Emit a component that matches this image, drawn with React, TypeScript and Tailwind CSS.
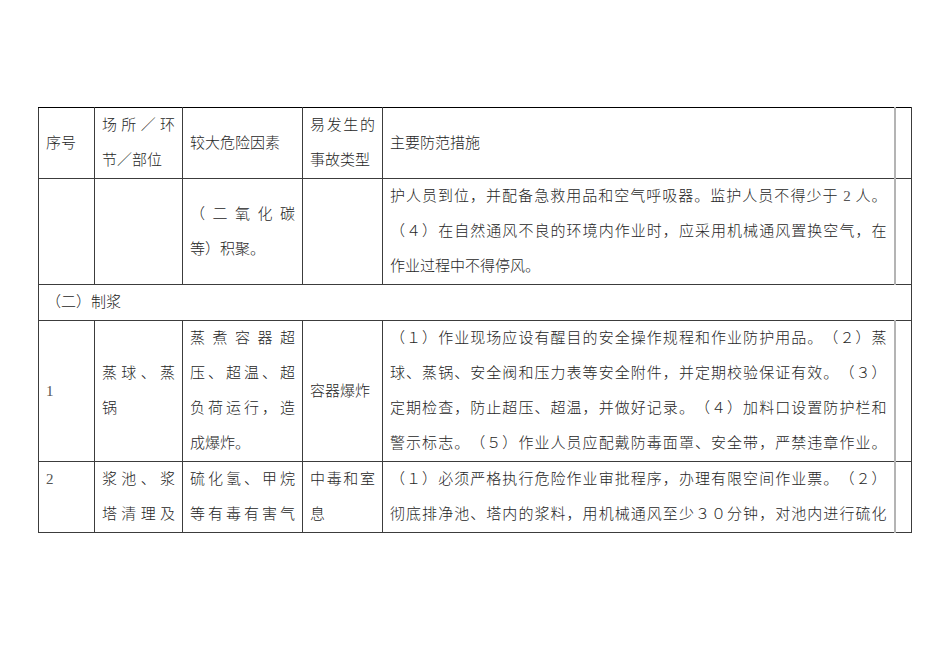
import React from "react";

type L = { t: React.ReactNode; j?: boolean };

const Cell = ({ lines, className = "" }: { lines: L[]; className?: string }) => (
  <td className={`border border-[#3c3c3c] px-[7px] py-0 ${className}`}>
    {lines.map((l, i) => (
      <div
        key={i}
        className={l.j ? "whitespace-nowrap text-justify [text-align-last:justify]" : "whitespace-nowrap"}
      >
        {l.t}
      </div>
    ))}
  </td>
);

const Narrow = () => <td className="border border-[#3c3c3c] border-l-2 border-l-[#b4b4b4] p-0"></td>;

export default function App() {
  return (
    <div className="w-[950px] h-[672px] bg-white overflow-hidden">
      <div className="pt-[107px] pl-[38px]">
        <table
          className="table-fixed border-collapse text-[15px] leading-[35px] font-light text-[#262626] border-t border-t-black [text-spacing-trim:space-all]"
          style={{ fontFamily: '"Liberation Serif", "Noto Sans CJK SC", serif' }}
        >
          <colgroup>
            <col className="w-[56px]" />
            <col className="w-[88px]" />
            <col className="w-[120px]" />
            <col className="w-[80px]" />
            <col className="w-[512px]" />
            <col className="w-[17px]" />
          </colgroup>
          <tbody>
            <tr className="align-middle h-[71px]">
              <Cell className="border-t-black" lines={[{ t: "序号" }]} />
              <Cell className="border-t-black" lines={[{ t: "场所／环", j: true }, { t: "节／部位" }]} />
              <Cell className="border-t-black" lines={[{ t: "较大危险因素" }]} />
              <Cell className="border-t-black" lines={[{ t: "易发生的", j: true }, { t: "事故类型" }]} />
              <Cell className="border-t-black" lines={[{ t: "主要防范措施" }]} />
              <td className="border border-[#3c3c3c] border-t-black border-l-2 border-l-[#b4b4b4] p-0"></td>
            </tr>
            <tr className="align-middle">
              <Cell lines={[]} />
              <Cell lines={[]} />
              <Cell lines={[{ t: "（二氧化碳", j: true }, { t: "等）积聚。" }]} />
              <Cell lines={[]} />
              <Cell
                lines={[
                  {
                    t: (
                      <>
                        护人员到位，并配备急救用品和空气呼吸器。监护人员不得少于 <span className="font-normal text-[#555]">2</span> 人。
                      </>
                    ),
                    j: true,
                  },
                  { t: "（４）在自然通风不良的环境内作业时，应采用机械通风置换空气，在", j: true },
                  { t: "作业过程中不得停风。" },
                ]}
              />
              <Narrow />
            </tr>
            <tr>
              <td colSpan={6} className="border border-[#3c3c3c] px-[7px] py-0 h-[36px]">
                （二）制浆
              </td>
            </tr>
            <tr className="align-middle">
              <Cell className="font-normal text-[#555]" lines={[{ t: "1" }]} />
              <Cell lines={[{ t: "蒸球、蒸", j: true }, { t: "锅" }]} />
              <Cell
                lines={[
                  { t: "蒸煮容器超", j: true },
                  { t: "压、超温、超", j: true },
                  { t: "负荷运行，造", j: true },
                  { t: "成爆炸。" },
                ]}
              />
              <Cell lines={[{ t: "容器爆炸" }]} />
              <Cell
                lines={[
                  { t: "（１）作业现场应设有醒目的安全操作规程和作业防护用品。（２）蒸", j: true },
                  { t: "球、蒸锅、安全阀和压力表等安全附件，并定期校验保证有效。（３）", j: true },
                  { t: "定期检查，防止超压、超温，并做好记录。（４）加料口设置防护栏和", j: true },
                  { t: "警示标志。（５）作业人员应配戴防毒面罩、安全带，严禁违章作业。", j: true },
                ]}
              />
              <Narrow />
            </tr>
            <tr className="align-top">
              <Cell className="font-normal text-[#555]" lines={[{ t: "2" }]} />
              <Cell lines={[{ t: "浆池、浆", j: true }, { t: "塔清理及", j: true }]} />
              <Cell lines={[{ t: "硫化氢、甲烷", j: true }, { t: "等有毒有害气", j: true }]} />
              <Cell lines={[{ t: "中毒和室", j: true }, { t: "息" }]} />
              <Cell
                lines={[
                  { t: "（１）必须严格执行危险作业审批程序，办理有限空间作业票。（２）", j: true },
                  { t: "彻底排净池、塔内的浆料，用机械通风至少３０分钟，对池内进行硫化", j: true },
                ]}
              />
              <Narrow />
            </tr>
          </tbody>
        </table>
      </div>
    </div>
  );
}
